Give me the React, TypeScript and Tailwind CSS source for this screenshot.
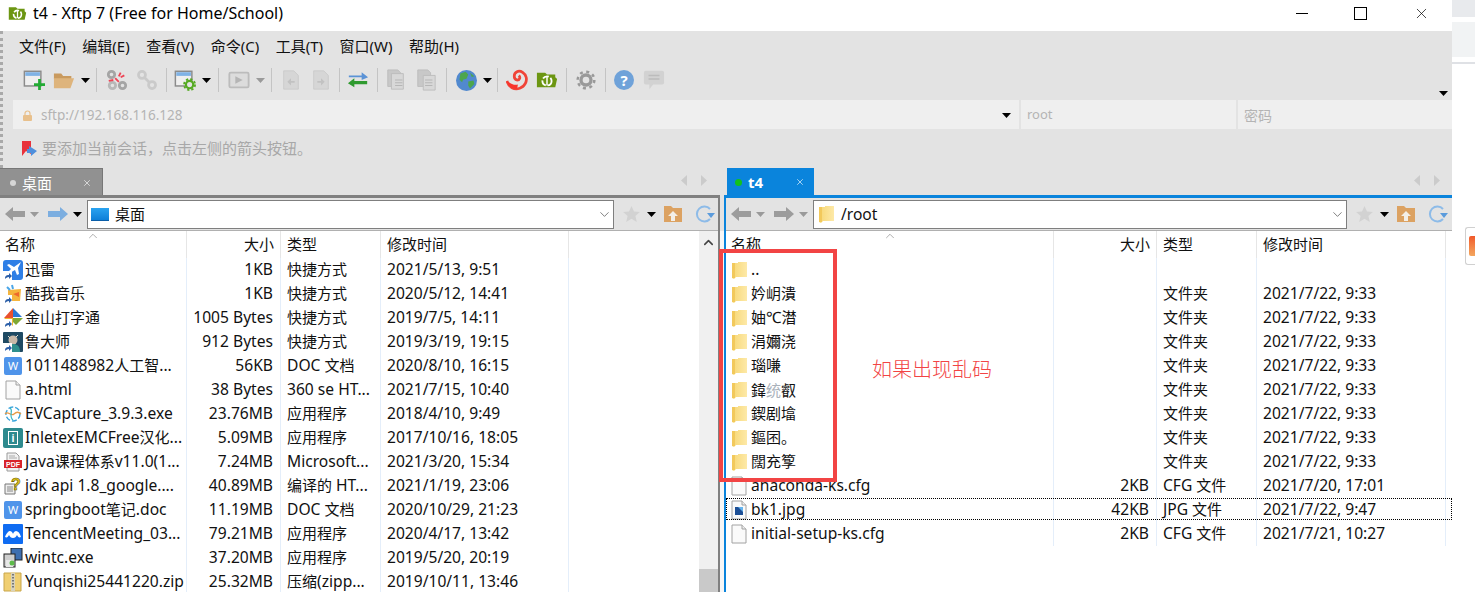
import type { ReactNode } from "react";
import { ChevronDown, ChevronUp, X } from "lucide-react";

// ---- toolbar drawings ----
function Caret({ dim }: { dim?: boolean }) {
  return (
    <svg width="9" height="5" viewBox="0 0 9 5">
      <path d="M0 0h9L4.5 5z" fill={dim ? "#9a9a9a" : "#000"} />
    </svg>
  );
}

function Ico({ children, s = 22 }: { children: ReactNode; s?: number }) {
  return (
    <svg width={s} height={s} viewBox="0 0 24 24">
      {children}
    </svg>
  );
}

const NewSession = () => (
  <Ico>
    <rect x="1.5" y="2.5" width="18" height="16" fill="#efefef" stroke="#8b8b8b" strokeWidth="1.6" />
    <rect x="2.5" y="3.5" width="16" height="4" fill="#7fb2e5" />
    <path d="M18 11v12M12 17h12" stroke="#22aa33" strokeWidth="3" />
  </Ico>
);
const OpenFolder = () => (
  <Ico>
    <path d="M1 5h8l2 2.5h9V11H1z" fill="#c99a5e" />
    <path d="M1 21V10h22l-4 11z" fill="#deb47c" />
  </Ico>
);
const Disconnect = () => (
  <Ico>
    <g fill="none" stroke="#a5a5a5" strokeWidth="3">
      <circle cx="6" cy="6" r="3.5" />
      <circle cx="18" cy="18" r="3.5" />
      <circle cx="7" cy="18" r="3.5" stroke="#b8b8b8" />
    </g>
    <path d="M10 10l4 4M16 4l-2 4M20 7l-4 2M3 13l5-1" stroke="#ee4455" strokeWidth="2" />
  </Ico>
);
const LinkIco = () => (
  <Ico>
    <g fill="none" stroke="#cacaca" strokeWidth="3">
      <circle cx="6.5" cy="6.5" r="3.8" />
      <circle cx="17.5" cy="17.5" r="3.8" />
      <path d="M9 9l6 6" />
    </g>
  </Ico>
);
const Props = () => (
  <Ico>
    <rect x="1.5" y="2.5" width="18" height="16" fill="#efefef" stroke="#8b8b8b" strokeWidth="1.6" />
    <rect x="2.5" y="3.5" width="16" height="4" fill="#7fb2e5" />
    <circle cx="17" cy="17" r="4" fill="#e3e3e3" stroke="#55aa22" strokeWidth="2.4" />
    <circle cx="17" cy="17" r="6" fill="none" stroke="#55aa22" strokeWidth="2" strokeDasharray="2.5 2.2" />
  </Ico>
);
const Play = () => (
  <Ico>
    <rect x="1.5" y="4" width="21" height="16" rx="1.5" fill="#dcdcdc" stroke="#bcbcbc" strokeWidth="2" />
    <path d="M8 8l8 4-8 4z" fill="#b5b5b5" />
  </Ico>
);
const DocArrow = ({ flip }: { flip?: boolean }) => (
  <Ico>
    <path d="M4 2h11l5 5v15H4z" fill="#d6d6d6" stroke="#cbcbcb" />
    <path d={flip ? "M8 13h4v-3l4 4-4 4v-3H8z" : "M16 13h-4v-3l-4 4 4 4v-3h4z"} fill="#c2c2c2" />
  </Ico>
);
const Transfer = () => (
  <Ico>
    <path d="M2 7h14V3.500L23 9l-7 3V9H2z" fill="#5b93d6" />
    <path d="M22 13H8V10l-7 5.500L8 20v-3.500h14z" fill="#2f9a2f" />
  </Ico>
);
const CopyIco = ({ big }: { big?: boolean }) => (
  <Ico>
    <path d="M3 1h11l3 3v15H3z" fill="#c8c8c8" stroke="#bdbdbd" />
    <path d={big ? "M9 7h13v16H9z" : "M7 5h13v17H7z"} fill="#d8d8d8" stroke="#bcbcbc" />
    <path d="M11 12h8M11 15h8M11 18h8" stroke="#b2b2b2" />
  </Ico>
);
const Globe = () => (
  <Ico s={21}>
    <circle cx="12" cy="12" r="12" fill="#5189cf" />
    <path d="M5 4l6-2 3 3-2 5-4 1-1 3-3-3zM14 13l6-1 1 4-5 5-2-3zM16 3l5 4-3 1z" fill="#4da64d" />
  </Ico>
);
const Snail = () => (
  <Ico>
    <path d="M1 13c2 7 8 10 14 8 6-2 8-8 7-12S16 1 12 3c-4 2-4 8 0 9 3 0 4-3 2-5" fill="none" stroke="#f04438" strokeWidth="3" />
    <path d="M1 13c4 3 8 5 12 4l-1 5c-6 0-10-3-11-9z" fill="#f8342c" />
  </Ico>
);
const XftpFolder = ({ s = 22 }: { s?: number }) => (
  <Ico s={s}>
    <path d="M1 4h9l2 2h9v3l2 2-2 9H1z" fill="#6c9612" />
    <circle cx="12" cy="13" r="5" fill="none" stroke="#fff" strokeWidth="2" strokeDasharray="7 2" />
    <path d="M12 8v10" stroke="#fff" strokeWidth="1.6" />
  </Ico>
);
const Gear = () => (
  <Ico s={20}>
    <circle cx="12" cy="12" r="6" fill="none" stroke="#999" strokeWidth="4" />
    <circle cx="12" cy="12" r="10" fill="none" stroke="#999" strokeWidth="3" strokeDasharray="3.600 4.250" />
  </Ico>
);
const Help = () => (
  <div className="flex h-[20px] w-[20px] items-center justify-center rounded-full bg-[#6fa2d9] text-[15px] font-bold text-white">?</div>
);
const Chat = () => (
  <Ico>
    <path d="M3 2h18a2 2 0 0 1 2 2v11a2 2 0 0 1-2 2H11l-4 5v-5H3a2 2 0 0 1-2-2V4a2 2 0 0 1 2-2z" fill="#d2d2d2" />
    <path d="M6 7h12M6 11h12" stroke="#bcbcbc" strokeWidth="1.6" />
  </Ico>
);

const ArrowIco = ({ dir, color }: { dir: "l" | "r"; color: string }) => (
  <svg width="20" height="16" viewBox="0 0 20 16">
    <path d={dir === "l" ? "M0 8l8-7v4h12v6H8v4z" : "M20 8l-8-7v4H0v6h12v4z"} fill={color} />
  </svg>
);

const Star = () => (
  <svg width="17" height="16" viewBox="0 0 24 23">
    <path d="M12 0l3.600 8 8.400.8-6.400 5.600 2 8.600L12 18.400 4.400 23l2-8.600L0 8.800 8.400 8z" fill="#d2d2d2" />
  </svg>
);
const UpFolder = () => (
  <svg width="18" height="16" viewBox="0 0 18 16">
    <path d="M0 0h7l2 2h9v14H0z" fill="#dca262" />
    <path d="M9 5l5 5h-3v5H7v-5H4z" fill="#f3efe8" />
  </svg>
);
const Refresh = () => (
  <svg width="20" height="18" viewBox="0 0 20 18">
    <path d="M15 14a7.500 7.500 0 1 1 0-10" fill="none" stroke="#8dbbe8" strokeWidth="2" />
    <path d="M12 8h8l-4 5z" fill="#5a9bdc" />
  </svg>
);

// ---- file list icons ----
const Folder = () => (
  <svg width="15" height="20" viewBox="0 0 15 20">
    <defs>
      <linearGradient id="fld" x1="0" x2="1" y1="0" y2="0">
        <stop offset="0" stopColor="#f7d774" />
        <stop offset="1" stopColor="#fde9a8" />
      </linearGradient>
    </defs>
    <path d="M0 3h6v-1h9v15H4l-2 2-2-1z" fill="url(#fld)" />
    <path d="M0 3h3v15H0z" fill="#f2c95c" />
  </svg>
);
const Page = ({ children }: { children?: ReactNode }) => (
  <svg width="16" height="20" viewBox="0 0 16 20">
    <path d="M1 1h10l4 4v14H1z" fill="#fafafa" stroke="#a2a2a2" />
    <path d="M11 1v4h4" fill="#eee" stroke="#a2a2a2" />
    {children}
  </svg>
);
const Shortcut = () => (
  <span className="absolute bottom-0 left-0 flex h-[9px] w-[9px] items-center justify-center bg-white">
    <svg width="8" height="8" viewBox="0 0 8 8">
      <path d="M1 7c0-3 1-4 4-4V1l3 3-3 3V5C3 5 2 6 1 7z" fill="#2c5fa8" />
    </svg>
  </span>
);
const Wrap = ({ children, cut }: { children: ReactNode; cut?: boolean }) => (
  <span className="relative flex h-[20px] w-[20px] shrink-0 items-center justify-center">
    {children}
    {cut && <Shortcut />}
  </span>
);
const WDoc = () => (
  <Wrap>
    <span className="flex h-[18px] w-[18px] items-center justify-center rounded-[2px] bg-[#4f94ea] text-[11px] text-white">W</span>
  </Wrap>
);

const leftIcons: Record<string, ReactNode> = {
  thunder: (
    <Wrap cut>
      <span className="h-[20px] w-[20px]">
        <svg width="20" height="20" viewBox="0 0 20 20">
          <rect width="20" height="20" rx="3" fill="#2f7fe6" />
          <path d="M18 2L11 7 6 4 4 5l4 4-3 3-3-1 3 3 7-4 2 5 2-1-1-6z" fill="#fff" />
        </svg>
      </span>
    </Wrap>
  ),
  kuwo: (
    <Wrap cut>
      <svg width="20" height="20" viewBox="0 0 20 20">
        <path d="M5 6l13-1-1 12H5z" fill="#f6b53d" />
        <path d="M10 10l6-2v5z" fill="#ee6a2c" />
        <path d="M4 3l3 3M9 1l1 4" stroke="#4aa6e8" strokeWidth="2" />
      </svg>
    </Wrap>
  ),
  jinshan: (
    <Wrap cut>
      <svg width="20" height="20" viewBox="0 0 20 20">
        <path d="M10 0v10H1z" fill="#e9502f" />
        <path d="M10 0l9 9h-9z" fill="#2a78d6" />
        <path d="M10 10h10l-7 7-3-3z" fill="#7fa834" />
        <path d="M1 10h9v8z" fill="#f2b632" />
      </svg>
    </Wrap>
  ),
  lu: (
    <Wrap cut>
      <svg width="20" height="20" viewBox="0 0 20 20">
        <rect width="20" height="20" rx="1" fill="#1f4a63" />
        <circle cx="10" cy="8" r="4.500" fill="#c9b9a8" />
        <path d="M3 20c0-6 3-8 7-8s7 2 7 8z" fill="#2f8f8c" />
        <path d="M5 4l2 2M15 3l-2 2" stroke="#e8e0d0" />
      </svg>
    </Wrap>
  ),
  word: <WDoc />,
  page: (
    <Wrap>
      <Page />
    </Wrap>
  ),
  ev: (
    <Wrap>
      <svg width="20" height="20" viewBox="0 0 20 20" fill="none">
        <circle cx="10" cy="10" r="7" stroke="#37a3dc" strokeWidth="1.4" strokeDasharray="5 2" />
        <path d="M2 10c3-4 6 3 9 0s5-2 7 0" stroke="#e89a45" strokeWidth="1.200" />
        <path d="M7 4c4 2-2 8 3 12" stroke="#3cb6c4" strokeWidth="1.200" />
      </svg>
    </Wrap>
  ),
  inle: (
    <Wrap>
      <span className="flex h-[20px] w-[20px] items-center justify-center rounded-[2px] bg-[#2d8a8e]">
        <span className="flex h-[14px] w-[10px] items-center justify-center border border-white text-[10px] font-bold leading-none text-white">i</span>
      </span>
    </Wrap>
  ),
  pdf: (
    <Wrap>
      <svg width="20" height="20" viewBox="0 0 20 20">
        <path d="M4 1h9l3 3v15H4z" fill="#f2f2f2" stroke="#9a9a9a" />
        <path d="M6 4h6M6 6h8" stroke="#aaa" />
        <rect x="1" y="8" width="18" height="8" fill="#d8232a" />
        <text x="10" y="14.700" textAnchor="middle" fontSize="7" fontWeight="700" fill="#fff" fontFamily="Liberation Sans">PDF</text>
      </svg>
    </Wrap>
  ),
  chm: (
    <Wrap>
      <svg width="20" height="20" viewBox="0 0 20 20">
        <path d="M2 8h10v10H2z" fill="#eee" stroke="#777" />
        <path d="M4 11h6M4 13h6M4 15h6" stroke="#888" />
        <text x="13" y="14" textAnchor="middle" fontSize="16" fontWeight="700" fill="#e8c91a" stroke="#6b5d00" strokeWidth=".6" fontFamily="Liberation Sans">?</text>
      </svg>
    </Wrap>
  ),
  tencent: (
    <Wrap>
      <svg width="20" height="20" viewBox="0 0 20 20">
        <rect width="20" height="20" rx="1" fill="#0f6cf2" />
        <path d="M2 13c2-5 4-6 5-6 2 0 3 3 3 3s1-3 3-3c2 0 4 2 5 6-2 1-3 0-4-2-1 2-2 3-4 3s-3-1-4-3c-1 2-2 3-4 2z" fill="#fff" />
      </svg>
    </Wrap>
  ),
  wintc: (
    <Wrap>
      <svg width="20" height="20" viewBox="0 0 20 20">
        <rect x="8" y="0" width="11" height="12" fill="#3e6fb0" stroke="#222" />
        <rect x="1" y="6" width="11" height="13" fill="#cfcfcf" stroke="#222" />
        <rect x="3" y="12" width="7" height="7" fill="#e8e8e8" />
        <circle cx="9" cy="15" r="2.500" fill="#5dbb4a" />
      </svg>
    </Wrap>
  ),
  zip: (
    <Wrap>
      <svg width="20" height="20" viewBox="0 0 20 20">
        <path d="M1 1h17v18H1z" fill="#f0cf72" stroke="#c9a64a" />
        <path d="M8 1h4v18H8z" fill="#d8d2bc" />
        <path d="M10 2v15" stroke="#777" strokeWidth="2" strokeDasharray="1.500 1.500" />
      </svg>
    </Wrap>
  ),
};

type Row = { icon: string; name: string; size: string; type: string; time: string };

const leftRows: Row[] = [
  { icon: "thunder", name: "迅雷", size: "1KB", type: "快捷方式", time: "2021/5/13, 9:51" },
  { icon: "kuwo", name: "酷我音乐", size: "1KB", type: "快捷方式", time: "2020/5/12, 14:41" },
  { icon: "jinshan", name: "金山打字通", size: "1005 Bytes", type: "快捷方式", time: "2019/7/5, 14:11" },
  { icon: "lu", name: "鲁大师", size: "912 Bytes", type: "快捷方式", time: "2019/3/19, 19:15" },
  { icon: "word", name: "1011488982人工智...", size: "56KB", type: "DOC 文档", time: "2020/8/10, 16:15" },
  { icon: "page", name: "a.html", size: "38 Bytes", type: "360 se HT...", time: "2021/7/15, 10:40" },
  { icon: "ev", name: "EVCapture_3.9.3.exe", size: "23.76MB", type: "应用程序", time: "2018/4/10, 9:49" },
  { icon: "inle", name: "InletexEMCFree汉化...", size: "5.09MB", type: "应用程序", time: "2017/10/16, 18:05" },
  { icon: "pdf", name: "Java课程体系v11.0(1...", size: "7.24MB", type: "Microsoft...", time: "2021/3/20, 15:34" },
  { icon: "chm", name: "jdk api 1.8_google....", size: "40.89MB", type: "编译的 HT...", time: "2021/1/19, 23:06" },
  { icon: "word", name: "springboot笔记.doc", size: "11.19MB", type: "DOC 文档", time: "2020/10/29, 21:23" },
  { icon: "tencent", name: "TencentMeeting_03...", size: "79.21MB", type: "应用程序", time: "2020/4/17, 13:42" },
  { icon: "wintc", name: "wintc.exe", size: "37.20MB", type: "应用程序", time: "2019/5/20, 20:19" },
  { icon: "zip", name: "Yunqishi25441220.zip", size: "25.32MB", type: "压缩(zipp...", time: "2019/10/11, 13:46" },
];

const folders = ["..", "妗岄潰", "妯℃澘", "涓嬭浇", "瑙嗛", "鍏统叡", "鍥剧墖", "鏂囨。", "闊充箰"];

const rightRows: { kind: string; name: string; size: string; type: string; time: string }[] = [
  ...folders.map((name, i) => ({ kind: "folder", name, size: "", type: i === 0 ? "" : "文件夹", time: i === 0 ? "" : "2021/7/22, 9:33" })),
  { kind: "page", name: "anaconda-ks.cfg", size: "2KB", type: "CFG 文件", time: "2021/7/20, 17:01" },
  { kind: "jpg", name: "bk1.jpg", size: "42KB", type: "JPG 文件", time: "2021/7/22, 9:47" },
  { kind: "page", name: "initial-setup-ks.cfg", size: "2KB", type: "CFG 文件", time: "2021/7/21, 10:27" },
];

const menus = ["文件(F)", "编辑(E)", "查看(V)", "命令(C)", "工具(T)", "窗口(W)", "帮助(H)"];

// the latin face here runs narrower than the original's, so latin gets a bigger size than cjk
function Txt({ s }: { s: string }) {
  return (
    <span>
      {s.split(/([\u3000-\u9fff]+)/).map((part, i) =>
        i % 2 === 1 ? (
          <span key={i} className="text-[15px]">{part}</span>
        ) : (
          <span key={i}>{part}</span>
        )
      )}
    </span>
  );
}

const Sep = ({ className }: { className: string }) => (
  <div className={`flex h-[24px] justify-center ${className}`}>
    <div className="h-full w-px bg-[#c4c4c4]" />
  </div>
);
const T = ({ children }: { children: ReactNode }) => <div className="flex w-[30px] justify-center">{children}</div>;
const D = ({ dim }: { dim?: boolean }) => (
  <div className="flex w-[12px] justify-center">
    <Caret dim={dim} />
  </div>
);

function TabArrows({ className }: { className: string }) {
  return (
    <div className={`flex items-center gap-[14px] pb-[3px] ${className}`}>
      <svg width="6" height="11" viewBox="0 0 6 11"><path d="M6 0v11L0 5.500z" fill="#cbcbcb" /></svg>
      <svg width="6" height="11" viewBox="0 0 6 11"><path d="M0 0v11l6-5.500z" fill="#cbcbcb" /></svg>
    </div>
  );
}

function Combo({ className, icon, text }: { className: string; icon: ReactNode; text: string }) {
  return (
    <div className={`flex h-[29px] items-center border border-[#7f7f7f] bg-white ${className}`}>
      {icon}
      <span className="flex-1 pt-[1px] text-[15.6px] text-[#111]"><Txt s={text} /></span>
      <ChevronDown size={15} strokeWidth={1} className="mr-[1px] text-[#333]" />
    </div>
  );
}

function NavTools() {
  return (
    <div className="ml-[7px] flex items-center">
      <div className="flex w-[20px] justify-center"><Star /></div>
      <div className="flex w-[20px] justify-center"><Caret /></div>
      <div className="flex w-[24px] justify-center"><UpFolder /></div>
      <div className="ml-[8px] flex w-[24px] justify-center"><Refresh /></div>
    </div>
  );
}

function Head({ label, right, first }: { label: string; right?: boolean; first?: boolean }) {
  return (
    <div className={`flex h-[27px] items-center border-r border-[#e6e6e6] pb-[1px] text-[15px] text-[#111] ${first ? "pl-[5px]" : "pl-[6px]"} ${right ? "justify-end pr-[6px]" : ""}`}>
      {label}
    </div>
  );
}

const cell = "flex h-[24px] items-center border-r border-[#e4eefa] text-[15.6px] text-[#111] whitespace-nowrap overflow-hidden";

function LeftPanel() {
  return (
    <div className="flex h-full w-[720px] flex-col border-r-2 border-t-[3px] border-[#808080] bg-[#e3e3e3]">
      <div className="flex h-[33px] items-center border-b border-[#b0b0b0]">
        <div className="ml-[5px] w-[20px]"><ArrowIco dir="l" color="#9c9c9c" /></div>
        <div className="ml-[4px] flex w-[10px] justify-center"><Caret dim /></div>
        <div className="ml-[9px] w-[20px]"><ArrowIco dir="r" color="#7caee0" /></div>
        <div className="flex w-[19px] justify-center"><Caret /></div>
        <Combo
          className="w-[527px]"
          text="桌面"
          icon={
            <span className="ml-[3px] mr-[6px] h-[13px] w-[18px] border-b border-[#0a5ea8] bg-gradient-to-b from-[#2aa3f0] to-[#0d7fd8]" />
          }
        />
        <NavTools />
      </div>
      <div className="flex min-h-0 flex-1 bg-white">
        <div className="relative min-w-0 flex-1">
          <ChevronUp size={14} strokeWidth={1} className="absolute left-[86px] top-[-2px] text-[#777]" />
          <div className="grid grid-cols-[187px_94px_100px_188px_1fr]">
            <Head label="名称" first />
            <Head label="大小" right />
            <Head label="类型" />
            <Head label="修改时间" />
            <div />
            {leftRows.map((r) => (
              <div key={r.name} className="contents">
                <div className={`${cell} gap-[2px] pl-[3px]`}>
                  {leftIcons[r.icon]}
                  <Txt s={r.name} />
                </div>
                <div className={`${cell} justify-end pr-[7px]`}><Txt s={r.size} /></div>
                <div className={`${cell} pl-[6px]`}><Txt s={r.type} /></div>
                <div className={`${cell} pl-[6px]`}>{r.time}</div>
                <div />
              </div>
            ))}
          </div>
        </div>
        <div className="flex w-[19px] flex-col items-center bg-[#f0f0f0]">
          <ChevronUp size={15} strokeWidth={2.5} className="mt-[4px] shrink-0 text-[#444]" />
          <div className="mt-[319px] h-[23px] w-full shrink-0 bg-[#c9c9c9]" />
        </div>
      </div>
    </div>
  );
}

function RightPanel() {
  return (
    <div className="flex h-full flex-1 flex-col border-l-2 border-t-[3px] border-[#0a84dc] bg-[#e3e3e3]">
      <div className="flex h-[33px] items-center border-b border-[#b0b0b0]">
        <div className="ml-[5px] w-[20px]"><ArrowIco dir="l" color="#9c9c9c" /></div>
        <div className="ml-[4px] flex w-[10px] justify-center"><Caret dim /></div>
        <div className="ml-[9px] w-[20px]"><ArrowIco dir="r" color="#9c9c9c" /></div>
        <div className="flex w-[19px] justify-center"><Caret dim /></div>
        <Combo
          className="w-[534px]"
          text="/root"
          icon={
            <span className="ml-[5px] mr-[7px] flex"><Folder /></span>
          }
        />
        <NavTools />
      </div>
      <div className="relative min-h-0 flex-1 bg-white">
        <ChevronUp size={14} strokeWidth={1} className="absolute left-[157px] top-[-2px] text-[#777]" />
        <div className="grid grid-cols-[328px_103px_100px_189px_1fr]">
          <Head label="名称" first />
          <Head label="大小" right />
          <Head label="类型" />
          <Head label="修改时间" />
          <div />
          {rightRows.map((r) => {
            const sel = r.name === "bk1.jpg";
            return (
              <div key={r.name} className={sel ? "relative col-span-5 grid grid-cols-subgrid" : "contents"}>
                {sel && <div className="absolute inset-x-0 top-0 h-[22px] border border-dotted border-black" />}
                <div className={`${cell} gap-[4px] pl-[5px]`}>
                  <span className="flex w-[16px] shrink-0 justify-center">
                    {r.kind === "folder" && <Folder />}
                    {r.kind === "page" && <Page />}
                    {r.kind === "jpg" && (
                      <Page>
                        <rect x="4" y="7" width="8" height="8" fill="#1d4f96" />
                        <path d="M7 7h5v5z" fill="#66b4ee" />
                      </Page>
                    )}
                  </span>
                  {r.name === "鍏统叡" ? (
                    <span className="text-[15px]">鍏<span className="text-[#aab2bb]">统</span>叡</span>
                  ) : (
                    <Txt s={r.name} />
                  )}
                </div>
                <div className={`${cell} justify-end pr-[7px]`}><Txt s={r.size} /></div>
                <div className={`${cell} pl-[6px]`}><Txt s={r.type} /></div>
                <div className={`${cell} pl-[6px]`}>{r.time}</div>
                <div />
              </div>
            );
          })}
        </div>
      </div>
    </div>
  );
}

export default function App() {
  return (
    <div className="relative flex h-[592px] w-[1475px] overflow-hidden bg-white font-['Noto_Sans','Noto_Sans_CJK_SC',sans-serif]">
      <div className="flex h-full w-[1452px] flex-col">
        {/* title bar */}
        <div className="flex h-[31px] items-center bg-white pb-[5px]">
          <div className="ml-[8px] mr-[6px] flex"><XftpFolder s={19} /></div>
          <span className="text-[16px] text-black">t4 - Xftp 7 (Free for Home/School)</span>
          <div className="ml-auto flex items-center">
            <svg width="12" height="1" className="mr-[46px]"><path d="M0 .5h12" stroke="#000" /></svg>
            <div className="mr-[46px] h-[13px] w-[13px] border border-black" />
            <X size={17} strokeWidth={1} className="mr-[22px] text-black" />
          </div>
        </div>

        {/* grey chrome */}
        <div className="border-l-[3px] border-dotted border-[#a9a9a9] bg-[#e3e3e3] pl-0">
          <div className="flex h-[33px] items-center gap-[16.5px] pb-[2px] pl-[16px] text-[15px] text-[#111]">
            {menus.map((m) => (
              <span key={m}>{m}</span>
            ))}
          </div>
          <div className="flex h-[36px] items-center pb-[4px] pl-[16px]">
            <T><NewSession /></T>
            <T><OpenFolder /></T>
            <D />
            <Sep className="w-[11px]" />
            <T><Disconnect /></T>
            <T><LinkIco /></T>
            <Sep className="w-[8px]" />
            <T><Props /></T>
            <D />
            <Sep className="w-[12px]" />
            <T><Play /></T>
            <D dim />
            <Sep className="w-[10px]" />
            <T><DocArrow /></T>
            <T><DocArrow flip /></T>
            <Sep className="w-[7px]" />
            <T><Transfer /></T>
            <Sep className="w-[8px]" />
            <T><CopyIco /></T>
            <T><CopyIco big /></T>
            <Sep className="w-[10px]" />
            <T><Globe /></T>
            <D />
            <Sep className="w-[9px]" />
            <T><Snail /></T>
            <T><XftpFolder /></T>
            <Sep className="w-[9px]" />
            <T><Gear /></T>
            <Sep className="w-[8px]" />
            <T><Help /></T>
            <T><Chat /></T>
            <div className="ml-auto self-end pr-[4px]"><Caret /></div>
          </div>
          <div className="flex h-[29px] gap-[2px] pl-[10px] text-[13.5px] text-[#b4b4b4]">
            <div className="flex w-[1006px] items-center bg-[#efefef] pl-[9px] pt-[2px]">
              <svg width="11" height="11" viewBox="0 0 11 11" className="mr-[8px]">
                <path d="M3 5V3.500a2.500 2.500 0 0 1 5 0V5" fill="none" stroke="#e8c08c" strokeWidth="1.200" />
                <rect x="1" y="5" width="9" height="6" rx="1" fill="#e8c08c" />
              </svg>
              <span>sftp://192.168.116.128</span>
              <div className="ml-auto mr-[8px]"><Caret /></div>
            </div>
            <div className="flex w-[215px] items-center bg-[#efefef] pl-[6px] pt-[1px] text-[13px]">root</div>
            <div className="flex w-[214px] items-center bg-[#efefef] pl-[6px] pt-[1px] text-[14px]">密码</div>
          </div>
          <div className="flex h-[39px] items-center pl-[18px] text-[15px] text-[#a8a8a8]">
            <svg width="16" height="16" viewBox="0 0 16 16" className="mr-[5px]">
              <path d="M1 0h9v13l-5-3-4 5z" fill="#e8323c" />
              <path d="M8 5l8 5-6 5v-3H6V8h2z" fill="#4f8fdc" />
            </svg>
            要添加当前会话，点击左侧的箭头按钮。
          </div>
        </div>

        {/* tabs */}
        <div className="flex h-[27px] items-end bg-[#e3e3e3]">
          <div className="flex w-[727px] items-end">
            <div className="flex h-[27px] w-[103px] items-center border-r border-t border-[#777] bg-[#919191] pt-[2px] text-[15px] text-white">
              <span className="ml-[10px] mr-[6px] h-[6px] w-[6px] rounded-full bg-[#d6d6d6]" />
              桌面
              <X size={10} strokeWidth={1.5} className="ml-auto mr-[10px]" />
            </div>
            <TabArrows className="ml-[578px] h-[27px]" />
          </div>
          <div className="flex h-[27px] w-[87px] items-center bg-[#0a84dc] pt-[1px] text-[15px] font-bold text-white">
            <span className="ml-[8px] mr-[6px] h-[7px] w-[7px] rounded-full bg-[#12c21e]" />
            t4
            <X size={10} strokeWidth={1.5} className="ml-auto mr-[9px]" />
          </div>
          <TabArrows className="ml-[600px] h-[27px]" />
        </div>

        {/* panels */}
        <div className="flex min-h-0 flex-1">
          <LeftPanel />
          <div className="flex w-[4px] flex-col">
            <div className="h-[36px] bg-[#e3e3e3]" />
            <div className="flex-1 bg-[#f7f7f7]" />
          </div>
          <RightPanel />
        </div>
      </div>

      {/* whatever sat behind the window */}
      <div className="flex flex-1 flex-col">
        <div className="h-[17px] bg-[#e8eaed]" />
        <div className="mt-[5px] h-[35px] bg-[#f1f3f4]" />
        <div className="mt-[5px] h-[2px] bg-[#dfe1e5]" />
        <div className="ml-[13px] mt-[163px] flex h-[38px] items-center rounded-l-[3px] border border-r-0 border-[#d0d0d0] bg-white pl-[3px]">
          <div className="h-[20px] w-[7px] rounded-l-[2px] bg-gradient-to-b from-[#f0582a] to-[#f2a65e]" />
        </div>
      </div>

      {/* annotation drawn on the screenshot */}
      <div className="absolute left-[719px] top-[249px] h-[233px] w-[118px] border-[4px] border-[#f24444]" />
      <div className="absolute left-[872px] top-[356px] text-[20px] leading-[28px] font-light text-[#f24444]">如果出现乱码</div>
    </div>
  );
}
